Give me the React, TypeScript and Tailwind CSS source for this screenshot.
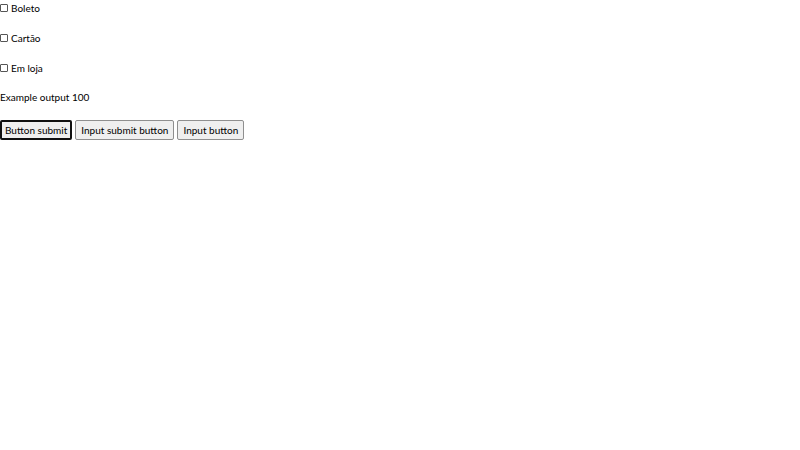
import React from "react";

const font = { fontFamily: 'Lato, "Noto Sans", sans-serif' };

function Check({ label }: { label: string }) {
  return (
    <label className="flex items-center h-[15px] text-[10px] text-black leading-none">
      <span className="w-[8px] h-[8px] border border-[#555] rounded-[1px] bg-white mr-[3px]" />
      <span>{label}</span>
    </label>
  );
}

function Btn({ label, focused }: { label: string; focused?: boolean }) {
  return (
    <button
      type="button"
      className={
        "h-[20px] text-[10px] leading-none text-black bg-[#efefef] rounded-[2px] " +
        (focused ? "px-[3px] border-2 border-[#101010]" : "px-[5px] border border-[#8f8f8f]")
      }
    >
      {label}
    </button>
  );
}

export default function App() {
  return (
    <div className="w-[800px] h-[450px] bg-white" style={font}>
      <div className="flex flex-col gap-[15px]">
        <Check label="Boleto" />
        <Check label="Cartão" />
        <Check label="Em loja" />
        <div className="h-[15px] flex items-center text-[10px] text-black">Example output 100</div>
      </div>
      <div className="flex gap-[3px] mt-[15px]">
        <Btn label="Button submit" focused />
        <Btn label="Input submit button" />
        <Btn label="Input button" />
      </div>
    </div>
  );
}
